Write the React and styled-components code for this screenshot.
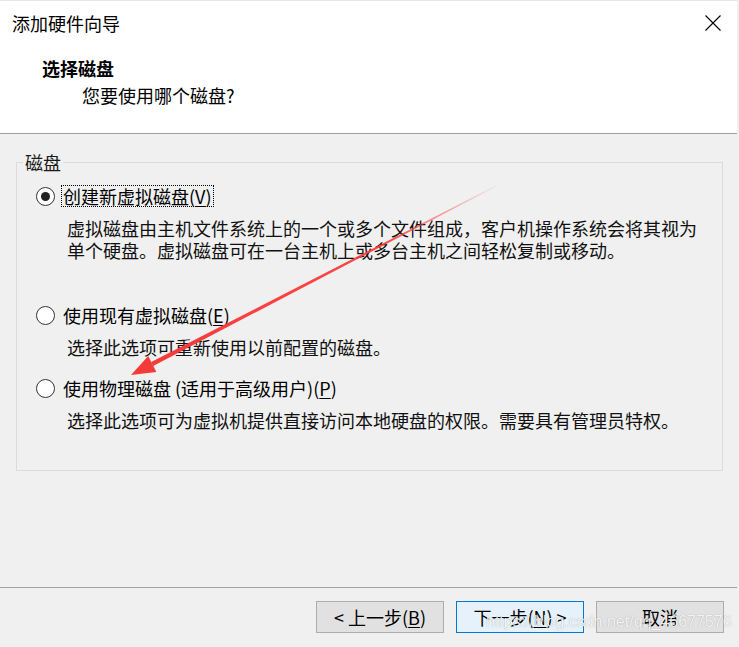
import React from 'react';
import styled, { createGlobalStyle } from 'styled-components';

const GlobalStyle = createGlobalStyle`
  html, body {
    margin: 0;
    padding: 0;
    background: #f0f0f0;
  }
  body {
    font-family: 'Noto Sans CJK SC', 'Noto Sans', sans-serif;
    color: #000;
  }
`;

const options = [
  {
    label: '创建新虚拟磁盘',
    key: 'V',
    checked: true,
    desc: [
      '虚拟磁盘由主机文件系统上的一个或多个文件组成，客户机操作系统会将其视为',
      '单个硬盘。虚拟磁盘可在一台主机上或多台主机之间轻松复制或移动。',
    ],
    gap: 43,
  },
  {
    label: '使用现有虚拟磁盘',
    key: 'E',
    desc: ['选择此选项可重新使用以前配置的磁盘。'],
    gap: 19,
  },
  {
    label: '使用物理磁盘 (适用于高级用户)',
    key: 'P',
    desc: ['选择此选项可为虚拟机提供直接访问本地硬盘的权限。需要具有管理员特权。'],
    gap: 0,
  },
];

const App = () => {
  return (
    <>
      <GlobalStyle />
      <Window>
        <Header>
          <TitleBar>
            <Title>添加硬件向导</Title>
            <CloseButton aria-label='close'>
              <svg width='16' height='16' viewBox='0 0 16 16'>
                <path d='M0.5 0.5 L15.5 15.5 M15.5 0.5 L0.5 15.5' stroke='#000' strokeWidth='1.1' fill='none' />
              </svg>
            </CloseButton>
          </TitleBar>
          <Heading>选择磁盘</Heading>
          <SubHeading>您要使用哪个磁盘?</SubHeading>
        </Header>

        <Body>
          <Group>
            <Legend>磁盘</Legend>
            {options.map((o) => (
              <Option key={o.key} $gap={o.gap}>
                <RadioRow>
                  <Radio $checked={o.checked} />
                  <RadioLabel $focused={o.checked}>
                    {o.label}(<u>{o.key}</u>)
                  </RadioLabel>
                </RadioRow>
                <Desc>
                  {o.desc.map((line) => (
                    <div key={line}>{line}</div>
                  ))}
                </Desc>
              </Option>
            ))}
          </Group>
        </Body>

        <Footer>
          <Button>
            &lt; 上一步(<u>B</u>)
          </Button>
          <Button $primary>
            下一步(<u>N</u>) &gt;
          </Button>
          <Button>取消</Button>
        </Footer>

        {/* red annotation arrow drawn over the dialog */}
        <Arrow width='739' height='647' viewBox='0 0 739 647'>
          <defs>
            <linearGradient id='arrowFade' gradientUnits='userSpaceOnUse' x1='496' y1='186' x2='131' y2='375'>
              <stop offset='0' stopColor='#ff3c3c' stopOpacity='0.05' />
              <stop offset='0.3' stopColor='#ff3c3c' stopOpacity='0.95' />
              <stop offset='1' stopColor='#f53a3a' stopOpacity='1' />
            </linearGradient>
          </defs>
          <polygon points='496.2,186.4 495.8,185.6 151.2,362.1 153.2,365.9' fill='url(#arrowFade)' />
          <polygon points='131,375 156.4,372 148.2,356' fill='#f53a3a' />
        </Arrow>

        <Watermark>https://blog.csdn.net/qq_46677576</Watermark>
      </Window>
    </>
  );
};

const Window = styled.div`
  position: relative;
  width: 737px;
  height: 647px;
  display: flex;
  flex-direction: column;
  background: #f0f0f0;
  overflow: hidden;
`;

const Header = styled.header`
  height: 134px;
  box-sizing: border-box;
  background: #fff;
  border-bottom: 1px solid #a0a0a0;
  flex-shrink: 0;
  border-top: 1px solid #e6e6e6;
`;

const TitleBar = styled.div`
  height: 43px;
  display: flex;
  align-items: center;
  justify-content: space-between;
  padding: 0 16px 0 12px;
`;

const Title = styled.div`
  font-size: 18px;
  line-height: 22px;
`;

const CloseButton = styled.div`
  width: 16px;
  height: 16px;
  display: flex;
  svg {
    display: block;
  }
`;

const Heading = styled.div`
  margin: 13px 0 0 42px;
  font-size: 18px;
  line-height: 22px;
  font-weight: 700;
`;

const SubHeading = styled.div`
  margin: 5px 0 0 82px;
  font-size: 18px;
  line-height: 22px;
`;

const Body = styled.main`
  flex: 1;
  padding: 17px 0 0 16px;
`;

const Group = styled.fieldset`
  box-sizing: border-box;
  width: 707px;
  height: 320px;
  margin: 0;
  padding: 12px 0 0 19px;
  border: 1px solid #dcdcdc;
  min-width: 0;
`;

const Legend = styled.legend`
  margin-left: -13px;
  padding: 0 2px 0 2px;
  font-size: 18px;
  line-height: 22px;
  color: #1a1a1a;
`;

const Option = styled.div`
  margin-bottom: ${(p) => p.$gap}px;
`;

const RadioRow = styled.div`
  display: flex;
  align-items: center;
  height: 22px;
  gap: 6px;
`;

const Radio = styled.span`
  position: relative;
  box-sizing: border-box;
  width: 19px;
  height: 19px;
  border-radius: 50%;
  border: 1px solid #333;
  background: #fff;
  flex-shrink: 0;
  &::after {
    content: '';
    display: ${(p) => (p.$checked ? 'block' : 'none')};
    position: absolute;
    left: 4px;
    top: 4px;
    width: 9px;
    height: 9px;
    border-radius: 50%;
    background: #222;
  }
`;

const RadioLabel = styled.span`
  font-size: 18px;
  line-height: 20px;
  padding: 0 1px;
  border: 1px dotted ${(p) => (p.$focused ? '#000' : 'transparent')};
  u {
    text-underline-offset: 2px;
  }
`;

const Desc = styled.div`
  margin-top: 10px;
  padding-left: 31px;
  font-size: 18px;
  line-height: 22px;
  color: #111;
  white-space: nowrap;
`;

const Footer = styled.footer`
  height: 60px;
  flex-shrink: 0;
  box-sizing: border-box;
  border-top: 1px solid #a0a0a0;
  display: flex;
  justify-content: flex-end;
  align-items: flex-start;
  gap: 12px;
  padding: 13px 13px 0 0;
`;

const Button = styled.button`
  width: 128px;
  height: 32px;
  box-sizing: border-box;
  font-family: 'Noto Sans CJK SC', 'Noto Sans', sans-serif;
  font-size: 18px;
  line-height: 22px;
  color: #000;
  padding: 0;
  border: 1px solid ${(p) => (p.$primary ? '#0078d7' : '#adadad')};
  background: ${(p) => (p.$primary ? '#e5f1fb' : '#e1e1e1')};
  u {
    text-underline-offset: 2px;
  }
`;

const Arrow = styled.svg`
  position: absolute;
  left: 0;
  top: 0;
  pointer-events: none;
`;

const Watermark = styled.div`
  position: absolute;
  left: 486px;
  top: 611px;
  font-family: 'Liberation Sans', Arial, sans-serif;
  font-size: 16px;
  line-height: 22px;
  color: rgba(255, 255, 255, 0.9);
  text-shadow: 0 0 1px rgba(0, 0, 0, 0.35);
  pointer-events: none;
`;

export default App;
